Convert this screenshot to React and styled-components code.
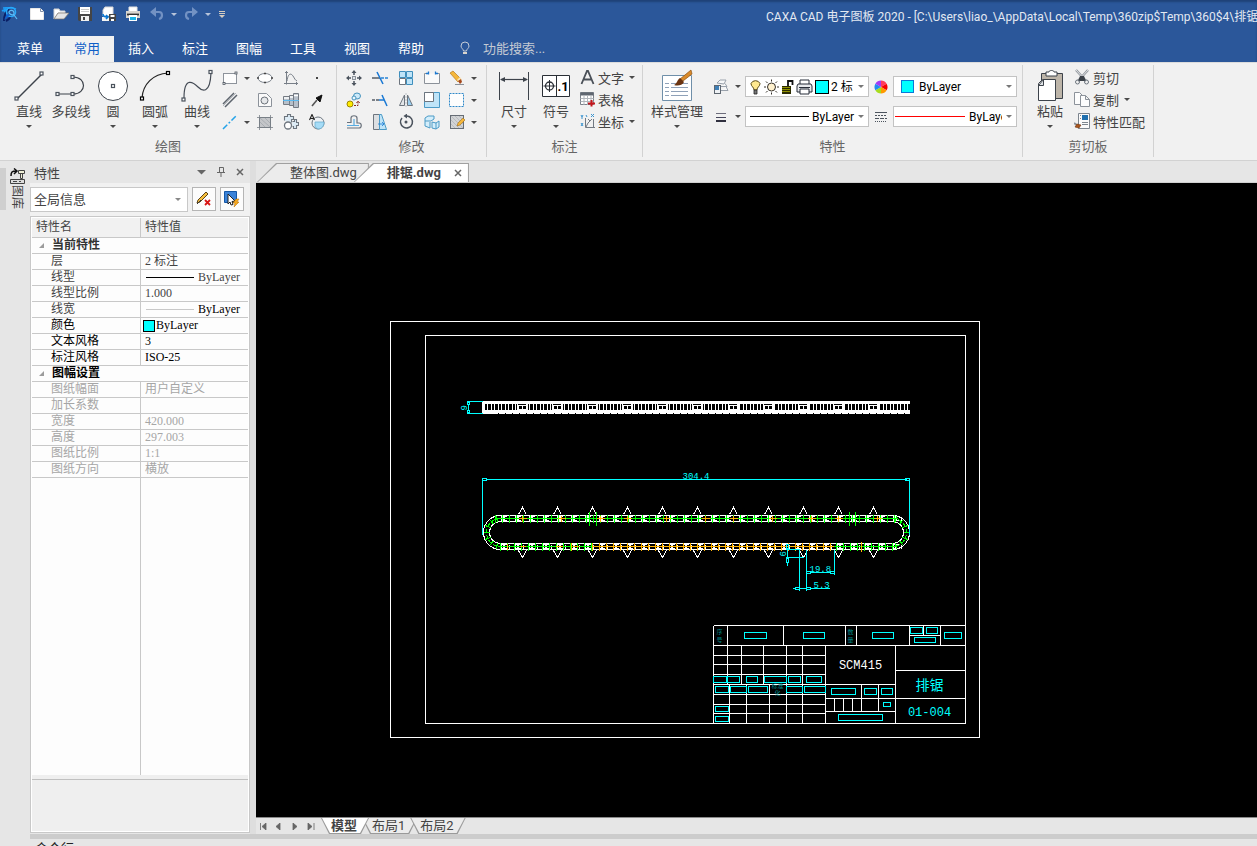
import React, { useState } from "react";
import styled, { createGlobalStyle, css } from "styled-components";

const uiFont = `Roboto, "Noto Sans CJK SC", "Noto Sans", sans-serif`;
const gridFont = `"Liberation Serif", "Noto Sans CJK SC", serif`;

const GlobalStyle = createGlobalStyle`
  *, *::before, *::after {
    box-sizing: border-box;
  }

  body {
    margin: 0;
    overflow: hidden;
    font-family: ${uiFont};
    font-size: 13px;
    color: #444;
    background: #e6e6e6;
  }

  button, input, select {
    font: inherit;
    color: inherit;
    margin: 0;
    padding: 0;
    border: none;
    background: none;
    border-radius: 0;
  }

  svg {
    display: block;
    flex: none;
  }
`;

const Shell = styled.div`
  height: 100vh;
  display: flex;
  flex-direction: column;
  overflow: hidden;
`;

/* ---------- title bar and menu ---------- */

const Header = styled.header`
  background: #2b579a;
  color: #fff;
  box-shadow: inset 0 2px 2px #1f4278;
`;

const TitleBar = styled.div`
  display: flex;
  justify-content: space-between;
  height: 36px;
`;

const QuickAccess = styled.div`
  display: flex;
  align-items: center;
  height: 28px;
  padding-left: 1px;
`;

const QuickTools = styled.div`
  display: flex;
  margin: 0 4px 0 6px;
`;

const QuickButton = styled.button`
  width: ${({ $narrow }) => ($narrow ? 10 : 24)}px;
  height: 22px;
  display: flex;
  align-items: center;
  justify-content: center;
`;

const WindowTitle = styled.div`
  flex: 0 0 491px;
  font-size: 12px;
  line-height: 34px;
  color: #e3e9f2;
  white-space: nowrap;
  overflow: hidden;
`;

const MenuBar = styled.nav`
  display: flex;
  height: 26px;
`;

const MenuTab = styled.button`
  width: ${({ $wide }) => ($wide ? 60 : 54)}px;
  line-height: 24px;
  color: #fff;

  ${({ $active }) =>
    $active &&
    css`
      background: #f1f1f1;
      color: #0f5fc8;
    `}
`;

const FeatureSearch = styled.label`
  display: flex;
  align-items: center;
  gap: 13px;
  margin-left: 22px;
  padding-bottom: 2px;
  color: #c3cfe1;

  input {
    width: 120px;
    outline: none;
  }

  input::placeholder {
    color: #c3c9d3;
    opacity: 1;
  }
`;

/* ---------- ribbon ---------- */

const Ribbon = styled.section`
  display: flex;
  background: #f1f1f1;
  border-top: 1px solid #dcdcdc;
  border-bottom: 1px solid #d2d2d2;
`;

const Group = styled.div`
  margin: 2px 0 3px;
  border-right: 1px solid #d2d2d2;
`;

const GroupBody = styled.div`
  display: flex;
  height: 72px;
  padding: 0 ${({ $right }) => $right}px 0 ${({ $left }) => $left}px;
`;

const GroupLabel = styled.div`
  line-height: 20px;
  text-align: center;
  color: #666;
`;

const BigButton = styled.button`
  width: ${({ $wide }) => ($wide ? 60 : 42)}px;
  padding-top: 4px;
  display: flex;
  flex-direction: column;
  align-items: center;
  line-height: 18px;
  white-space: nowrap;
`;

const Caret = styled.span`
  flex: none;
  width: 0;
  height: 0;
  border: 3px solid transparent;
  border-bottom: none;
  border-top-color: ${({ $light }) => ($light ? "#b7c4da" : "#4a4a4a")};
  margin: ${({ $gap }) => $gap || 0}px 0 0;
`;

const ToolGrid = styled.div`
  display: grid;
  grid-template-columns: ${({ $columns }) => $columns};
  grid-auto-rows: 22px;
  padding-top: 2px;
`;

const ToolButton = styled.button`
  display: flex;
  align-items: center;
  justify-content: ${({ $split }) => ($split ? "flex-start" : "center")};
  gap: 6px;
  padding-left: ${({ $split }) => ($split ? 4 : 0)}px;
`;

const RowList = styled.div`
  display: flex;
  flex-direction: column;
  padding: 1px 0 0 3px;
`;

const RowButton = styled.button`
  display: flex;
  align-items: center;
  height: 22px;
  gap: 3px;

  ${Caret} {
    margin-left: 2px;
  }
`;

const ComboStack = styled.div`
  display: flex;
  flex-direction: column;
  gap: 9px;
  padding: 11px 0 0 6px;
`;

const ComboLine = styled.div`
  display: flex;
  align-items: center;
  height: 21px;
`;

const StackButton = styled.button`
  width: ${({ $split }) => ($split ? 32 : 24)}px;
  display: flex;
  align-items: center;
  justify-content: ${({ $split }) => ($split ? "flex-start" : "center")};
  gap: 6px;
`;

const Combo = styled.label`
  width: 124px;
  height: 21px;
  display: flex;
  align-items: center;
  gap: ${({ $gap }) => $gap}px;
  padding: 0 4px 0 ${({ $left }) => $left}px;
  background: #fff;
  border: 1px solid #c3c3c3;
  color: #000;
  font-size: 12px;

  select {
    appearance: none;
    flex: 1 1 0;
    min-width: 0;
    height: 19px;
    outline: none;
    overflow: hidden;
    text-overflow: clip;
  }

  ${Caret} {
    border-top-color: #777;
    margin-left: ${({ $tail }) => $tail || 0}px;
  }
`;

const Swatch = styled.span`
  flex: none;
  width: ${({ $size }) => $size}px;
  height: ${({ $size }) => $size}px;
  background: #00ffff;
  border: 1px solid ${({ $edge }) => $edge};
`;

const LineSample = styled.span`
  flex: 0 0 ${({ $length }) => $length}px;
  height: 1px;
  background: ${({ $color }) => $color};
`;

/* ---------- work area ---------- */

const Main = styled.main`
  flex: 1;
  min-height: 0;
  display: flex;
`;

const Rail = styled.aside`
  flex: 0 0 30px;
  padding-top: 7px;
  display: flex;
  align-items: flex-start;
  gap: 4px;
`;

const RailHandle = styled.div`
  width: 6px;
  height: 42px;
  background: #cfcfcf;
`;

const RailTab = styled.button`
  width: 14px;
  display: flex;
  flex-direction: column;
  align-items: center;
  font-size: 12px;
  line-height: 14px;
  gap: 1px;

  span {
    writing-mode: vertical-rl;
    text-orientation: sideways;
  }
`;

const Panel = styled.aside`
  flex: 0 0 220px;
  display: flex;
  flex-direction: column;
`;

const PanelTitle = styled.div`
  height: 22px;
  display: flex;
  align-items: center;
  padding: 0 1px 0 4px;

  h2 {
    flex: 1;
    margin: 0;
    font-size: 13px;
    font-weight: 400;
  }
`;

const PanelIcon = styled.button`
  width: 19px;
  display: flex;
  justify-content: center;
  color: #666;
`;

const PanelTools = styled.div`
  display: flex;
  gap: 4px;
  padding: 4px 0 4px;
  background: #f1f1f1;
`;

const FilterCombo = styled.label`
  width: 158px;
  height: 25px;
  display: flex;
  align-items: center;
  padding: 0 6px 0 3px;
  background: #fff;
  border: 1px solid #c8c8c8;
  font-size: 13px;

  select {
    appearance: none;
    flex: 1;
    outline: none;
  }

  ${Caret} {
    border-top-color: #888;
  }
`;

const FilterButton = styled.button`
  width: 24px;
  height: 24px;
  display: flex;
  align-items: center;
  justify-content: center;
  background: #fcfcfc;
  border: 1px solid #b5b5b5;
`;

const PropertyBox = styled.div`
  flex: 1;
  display: flex;
  flex-direction: column;
  margin-bottom: 1px;
  padding: 1px;
  background: #fff;
  border: 1px solid #c8c8c8;
`;

const PropertyScroll = styled.div`
  flex: 1;
  background: linear-gradient(#c8c8c8, #c8c8c8) 108px 0 / 1px 100% no-repeat #fdfdfd;
`;

const PropertyTable = styled.table`
  width: 100%;
  table-layout: fixed;
  border-collapse: separate;
  border-spacing: 0;
  font-family: ${gridFont};
  font-size: 12px;
  line-height: 15px;

  th, td {
    padding: 0;
    height: 16px;
    text-align: left;
    font-weight: 400;
    white-space: nowrap;
    overflow: hidden;
    border-bottom: 1px solid #c8c8c8;
  }

  thead th {
    height: 20px;
    padding-left: 4px;
    background: #f1f1f1;
    font-family: ${uiFont};
  }

  thead th:first-child {
    border-right: 1px solid #c8c8c8;
  }
`;

const PropertyRow = styled.tr`
  color: ${({ $tone }) => ({ dim: "#a6a6a6", strong: "#000" })[$tone] || "#444"};

  th {
    padding-left: 19px;
    border-right: 1px solid #c8c8c8;
  }

  td {
    padding-left: 4px;
  }
`;

const SectionCell = styled.th`
  background: #fdfdfd;
  color: ${({ $strong }) => ($strong ? "#000" : "#333")};

  button {
    display: flex;
    align-items: center;
    gap: 8px;
    padding-left: 6px;
    font-weight: 700;
    line-height: 15px;
  }
`;

const ValueLine = styled.span`
  display: flex;
  align-items: center;
  gap: ${({ $swatch }) => ($swatch ? 1 : 4)}px;
  margin-left: ${({ $swatch }) => ($swatch ? -2 : 1)}px;
  color: ${({ $strong }) => ($strong ? "#000" : "inherit")};
`;

const PropertyHint = styled.div`
  height: 56px;
  padding-top: 4px;
  background: #efefef;

  &::before {
    content: "";
    display: block;
    height: 1px;
    background: #c0c0c0;
  }
`;

const Splitter = styled.div`
  flex: 0 0 6px;
  background: #dedede;
`;

const Workspace = styled.section`
  flex: 1;
  min-width: 0;
  display: flex;
  flex-direction: column;
`;

const DocTabs = styled.div`
  display: flex;
  align-items: flex-end;
  height: 22px;
  padding-top: 2px;
  border-bottom: 1px solid #d0d0d0;
`;

const DocTab = styled.div`
  position: relative;
  isolation: isolate;
  height: 19px;
  display: flex;
  align-items: center;
  gap: 13px;
  padding: 0 ${({ $active }) => ($active ? 7 : 12)}px 0 33px;
  margin-left: ${({ $active }) => ($active ? -15 : 1)}px;
  font-size: 13px;
  font-weight: ${({ $active }) => ($active ? 700 : 400)};
  line-height: 18px;
  white-space: nowrap;

  &::before, &::after {
    content: "";
    position: absolute;
    inset: 0;
    z-index: -1;
    background: #a0a0a0;
    clip-path: polygon(19px 0, 100% 0, 100% 100%, 0 100%);
  }

  &::after {
    inset: 1px 1px 0;
    background: ${({ $active }) => ($active ? "#fff" : "#ececec")};
  }

  button {
    font-weight: inherit;
  }
`;

const Canvas = styled.div`
  flex: 1;
  min-height: 0;
  background: #000;
  overflow: hidden;
`;

const SheetBar = styled.div`
  flex: none;
  display: flex;
  height: 17px;
  border-top: 1px solid #8a8a8a;
`;

const SheetNav = styled.div`
  display: flex;
  width: 65px;

  button {
    width: 16px;
    display: flex;
    align-items: center;
    padding-left: 3px;
  }
`;

const SheetTab = styled.button`
  position: relative;
  isolation: isolate;
  height: 16px;
  padding: 0 12px 0 10px;
  margin-right: -7px;
  line-height: 14px;
  font-weight: ${({ $active }) => ($active ? 700 : 400)};
  z-index: ${({ $active }) => ($active ? 1 : 0)};

  &::before, &::after {
    content: "";
    position: absolute;
    inset: 0;
    z-index: -1;
    background: #9a9a9a;
    clip-path: polygon(0 0, 100% 0, calc(100% - 8px) 100%, 8px 100%);
  }

  &::after {
    inset: 0 1px 1px;
    background: ${({ $active }) => ($active ? "#fff" : "#ececec")};
  }
`;

const CommandDock = styled.footer`
  flex: 0 0 12px;
  margin-left: 30px;
  border-top: 5px solid #cccccc;
  padding: 0 5px;
  line-height: 20px;
  color: #222;
  overflow: hidden;
`;

/* ---------- icons ---------- */

const Svg = ({ w = 16, h = 16, children }) => (
  <svg width={w} height={h} viewBox={`0 0 ${w} ${h}`} fill="none" stroke="#4b535d" aria-hidden="true">
    {children}
  </svg>
);

const node = { fill: "#fff", width: 3, height: 3, strokeWidth: 1.2 };

const icons = {
  logo: (
    <Svg w={18} h={18}>
      <path d="M3 16c0-5 1-9 5-12M5 16c2-1 4-3 5-5" stroke="#0a1f66" strokeWidth="2" />
      <path d="M2 3c4 0 8-1 13 1M3 7l3-3M1 6l4-2" stroke="#1d9df5" strokeWidth="1.600" />
      <circle cx="10" cy="7" r="4.5" stroke="#28a9fa" strokeWidth="1.600" />
      <path d="M8 8c0-4 5-3 5 0s-3 2-5 0M13 10l3 4" stroke="#5cbcf7" strokeWidth="1.200" />
      <path d="M3 15l3-6 3 1z" fill="#0d62d8" stroke="none" />
    </Svg>
  ),
  newFile: (
    <Svg>
      <path d="M1.500 2.500h10l3 3v8h-13z" fill="#fff" stroke="#e8e8e8" />
      <path d="M11.500 2.500v3h3" stroke="#7f8fa9" />
    </Svg>
  ),
  open: (
    <Svg>
      <path d="M1 13V3h5l1 2h5v2h-7z" fill="#fff" stroke="#d4d4d4" />
      <path d="M1 13l4-6h11l-5 6z" fill="#e6e6e6" stroke="#7b7468" strokeWidth=".7" />
    </Svg>
  ),
  save: (
    <Svg>
      <path d="M1 1h14v14H2l-1-1z" fill="#454545" stroke="none" />
      <path d="M3 1h10v7H3z" fill="#fff" stroke="none" />
      <path d="M4 3.500h8M4 5.500h8" stroke="#c9c9c9" />
      <path d="M4 10h8v5H4z" fill="#efefef" stroke="none" />
      <path d="M6 11h2v3H6z" fill="#454545" stroke="none" />
    </Svg>
  ),
  saveAs: (
    <Svg>
      <path d="M4 1h8v9H2V4z" fill="#fff" stroke="#d8d8d8" />
      <path d="M1 11h8v4H1z" fill="#f4f4f4" stroke="none" />
      <path d="M2 8c0 3 2 3 4 3M5 9l2 2-2 2" stroke="#0978d4" strokeWidth="1.6" />
      <path d="M8 8h7v7H8z" fill="#454545" stroke="none" />
      <path d="M9.500 9h4v2h-4zM10 13h3v2h-3z" fill="#fff" stroke="none" />
    </Svg>
  ),
  print: (
    <Svg>
      <path d="M4 5V1h8v4" fill="#fff" stroke="#e4e4e4" />
      <path d="M1 5h14v7H1z" fill="#d8d5cf" stroke="none" />
      <path d="M2 8.500h12" stroke="#333" strokeWidth="1.800" />
      <path d="M4 9h8v6H4z" fill="#fff" stroke="none" />
      <path d="M5 11h6v3H5z" fill="#1db5e8" stroke="none" />
    </Svg>
  ),
  undo: (
    <Svg>
      <path d="M2 6h8c4 0 4 6 0 7" stroke="#7392c3" strokeWidth="2.200" />
      <path d="M7 1v10L1 6z" fill="#7392c3" stroke="none" />
    </Svg>
  ),
  redo: (
    <Svg>
      <path d="M14 6H6c-4 0-4 6 0 7" stroke="#7392c3" strokeWidth="2.200" />
      <path d="M9 1v10l6-5z" fill="#7392c3" stroke="none" />
    </Svg>
  ),
  customize: (
    <Svg w={6} h={9}>
      <path d="M0 1.500h6M0 3.500h6" stroke="#d3cbbf" />
      <path d="M0 5h6L3 8z" fill="#d3cbbf" stroke="none" />
    </Svg>
  ),
  hint: (
    <Svg w={10} h={14}>
      <path d="M3.500 10c0-2-2.500-2.600-2.500-5a4 4 0 0 1 8 0c0 2.400-2.500 3-2.500 5z" stroke="#c5ccd8" />
      <path d="M3 11h4v2H3z" fill="#d9d4cc" stroke="none" />
    </Svg>
  ),
  line: (
    <Svg w={32} h={34}>
      <path d="M4 30L29 5" stroke="#3d434b" strokeWidth="1.500" />
      <rect x="2" y="28" {...node} />
      <rect x="27" y="3" {...node} />
    </Svg>
  ),
  polyline: (
    <Svg w={32} h={34}>
      <path d="M2 25h16c14 0 14-17 0-17" stroke="#3d434b" strokeWidth="1.200" />
      <rect x="1" y="23.500" {...node} />
      <rect x="16" y="23.500" {...node} />
      <rect x="16" y="6.500" {...node} />
    </Svg>
  ),
  circle: (
    <Svg w={32} h={34}>
      <circle cx="16" cy="17" r="14.500" fill="#fff" stroke="#3d434b" />
      <rect x="14.500" y="15.500" {...node} />
    </Svg>
  ),
  arc: (
    <Svg w={32} h={34}>
      <path d="M3 29C4 15 14 5 29 4" stroke="#222" strokeWidth="1.200" />
      <g stroke="#000">
        <rect x="1.500" y="28" {...node} />
        <rect x="27.500" y="2.500" {...node} />
      </g>
    </Svg>
  ),
  spline: (
    <Svg w={32} h={34}>
      <path d="M3 29C3 6 13 14 17 18s12 8 13-14" stroke="#444b55" strokeWidth="1.200" />
      <rect x="1" y="29" {...node} />
      <rect x="28" y="1.500" {...node} />
    </Svg>
  ),
  rect: (
    <Svg>
      <rect x="1.500" y="3.500" width="13" height="10" fill="#fdfdfd" stroke="#8d939b" />
      <rect x="13" y="2" width="2" height="2" fill="#fff" stroke="#4b535d" strokeWidth=".8" />
      <rect x="1" y="12.500" width="2" height="2" fill="#fff" stroke="#4b535d" strokeWidth=".8" />
    </Svg>
  ),
  ellipse: (
    <Svg>
      <ellipse cx="8" cy="8" rx="7" ry="4.500" fill="#fff" stroke="#7d848d" />
      <path d="M7 3.500h2M7 12.500h2M1 7v2M15 7v2" stroke="#444" strokeWidth="1.500" />
    </Svg>
  ),
  curve: (
    <Svg>
      <path d="M3.500 1v13.500M1 13.500h14M2 2.500h3M13.500 12v3" stroke="#777e87" />
      <path d="M4 11C5 3 8 3 10 6s2 4 4 5" stroke="#777e87" />
    </Svg>
  ),
  point: (
    <Svg>
      <rect x="7" y="7" width="2" height="2" fill="#444" stroke="none" />
    </Svg>
  ),
  parallel: (
    <Svg>
      <path d="M1 12L12 1M3 15L15 3" stroke="#5d646d" strokeWidth="1.500" />
      <path d="M1 14L14 1" stroke="#b4b8be" />
    </Svg>
  ),
  region: (
    <Svg>
      <path d="M1.500 1.500h8l5 5v8h-13z" fill="#fafafa" stroke="#8c929a" />
      <circle cx="7.500" cy="8.500" r="3.500" fill="#e6e8ea" stroke="#6b7179" />
    </Svg>
  ),
  shaft: (
    <Svg>
      <path d="M.5 4.500h6v8h-6zM6.500 3.500h4v10h-4zM10.500 1.500h5v14h-5z" fill="#b7c0ca" stroke="#747a82" />
      <path d="M1 6h5M7 5h3M11 3.500h4" stroke="#fff" strokeWidth="1.500" />
      <path d="M0 8.500h16" stroke="#5ab8ee" />
    </Svg>
  ),
  arrow: (
    <Svg>
      <path d="M3 14l5-6" stroke="#555" strokeWidth="1.600" />
      <path d="M13 3L7 6l4 4z" fill="#111" stroke="#111" />
    </Svg>
  ),
  centerline: (
    <Svg>
      <path d="M1 15L15 1" stroke="#25a3e8" strokeWidth="1.500" strokeDasharray="6 2 2 2" />
    </Svg>
  ),
  hatch: (
    <Svg>
      <rect x="2.500" y="3.500" width="11" height="10" fill="#c4c6c9" stroke="#737981" />
      <path d="M0 3.500h16M0 13.500h16M2.500 1v15M13.500 1v15" stroke="#7a8088" strokeWidth=".8" />
      <path d="M3 8l5 5M3 4l10 9M8 4l5 5" stroke="#979ca2" strokeWidth=".6" />
    </Svg>
  ),
  gears: (
    <Svg>
      <path
        d="M1.500 6.500v-4h3v-2h3v2h3v3h-2v3M9.500 7.500h2v-2h2v3h2v3h-2v3h-3v-2h-1"
        stroke="#6d757e"
        strokeWidth="1.100"
        fill="#dcebf5"
      />
      <circle cx="5" cy="11.500" r="3.500" fill="#fff" stroke="#6d757e" strokeWidth="1.300" />
    </Svg>
  ),
  localView: (
    <Svg>
      <circle cx="9" cy="9" r="6" fill="#eef1f4" stroke="#6d757e" />
      <path d="M6 8h9c0 4-2 7-6 7l-3-2z" fill="#a6dcf7" stroke="#6aaed0" strokeWidth=".8" />
      <path d="M.5 6L3 .5 5.500 6M1.500 4.500h3" stroke="#222" strokeWidth="1.100" />
    </Svg>
  ),
  move: (
    <Svg>
      <path d="M8 2v3M8 11v3M2 8h3M11 8h3" stroke="#4b535d" strokeWidth="1.500" />
      <path d="M8 0l2.500 3h-5zM8 16l2.500-3h-5zM0 8l3-2.500v5zM16 8l-3-2.500v5z" fill="#4b535d" stroke="none" />
      <rect x="6.500" y="6.500" width="3" height="3" fill="#e0e4e8" stroke="#8c939b" />
    </Svg>
  ),
  trim: (
    <Svg>
      <path d="M0 8h8" stroke="#555c65" strokeWidth="1.500" />
      <path d="M9 8h7" stroke="#2784d6" strokeWidth="1.300" strokeDasharray="3 1" />
      <path d="M5 2l6 12" stroke="#1878d4" strokeWidth="1.500" />
    </Svg>
  ),
  array: (
    <Svg>
      <path d="M1.500 1.500h6v6h-6zM8.500 1.500h6v6h-6zM8.500 8.500h6v6h-6z" fill="#bfe4f8" stroke="#3f8fbd" />
      <path d="M1.500 8.500h6v6h-6z" fill="#fff" stroke="#6d757e" />
    </Svg>
  ),
  breakAt: (
    <Svg>
      <path d="M5 3.500H.5v10h15v-10H11" fill="#fafafa" stroke="#8b9199" />
      <path d="M4.500 1.500v3M11.500 1.500v3M2 3.500h3M11 3.500h3" stroke="#1b78cf" strokeWidth="1.300" />
    </Svg>
  ),
  erase: (
    <Svg>
      <path d="M1 3l3-2 8 8-3 3z" fill="#f5b73b" stroke="#b77a1d" strokeWidth=".7" />
      <path d="M8 10l3-3 2 3-3 2z" fill="#fbe3b2" stroke="none" />
      <path d="M9 11l3-2 1 3-2 2z" fill="#a5481d" stroke="none" />
      <path d="M6 14.500h9" stroke="#8b9199" />
    </Svg>
  ),
  copyObj: (
    <Svg>
      <circle cx="4" cy="12" r="3" fill="#ffea00" stroke="#9b8700" />
      <ellipse cx="11" cy="4" rx="3.500" ry="3" fill="#cdeafa" stroke="#4593bd" />
      <ellipse cx="8" cy="6" rx="2" ry="2" stroke="#4593bd" fill="#e9f6fd" />
      <path d="M8 13.500h4v-4M10.500 11l1.500-2 2 2" stroke="#8a2a22" strokeDasharray="2 1" />
    </Svg>
  ),
  extend: (
    <Svg>
      <path d="M0 8h7" stroke="#555c65" strokeWidth="1.500" strokeDasharray="3 1" />
      <path d="M7 8h5" stroke="#1878d4" strokeWidth="1.500" />
      <path d="M10 3l5 11" stroke="#1878d4" strokeWidth="1.500" />
    </Svg>
  ),
  mirror: (
    <Svg>
      <path d="M6.500 3v10.500h-5z" fill="#e3e6e9" stroke="#6d757e" />
      <path d="M9.500 3v10.500h5z" fill="#9bcff0" stroke="#6d757e" />
      <path d="M8 1v14" stroke="#b0b6bd" strokeWidth=".8" strokeDasharray="2 1" />
    </Svg>
  ),
  scale: (
    <Svg>
      <path d="M.5.500h15v15H.5z" fill="#bfe4f8" stroke="#4b9ac6" />
      <path d="M.5.500h9v9h-9z" fill="#fff" stroke="#6d757e" />
    </Svg>
  ),
  stretchBox: (
    <Svg>
      <rect x=".5" y="1.500" width="14" height="13" fill="#fdfdfd" stroke="#2e88c9" strokeDasharray="2 1" />
    </Svg>
  ),
  offset: (
    <Svg>
      <path d="M1 8.500h4V4c0-3 6-3 6 0v5h2c3 0 3 5 0 5H1" stroke="#69717b" strokeWidth="1.200" />
      <path d="M1 11.500h7V5M8 11.500h5" stroke="#59ace0" strokeWidth="1.200" />
    </Svg>
  ),
  chamfer: (
    <Svg>
      <path d="M1.500.5h6v15h-6z" fill="#dcdfe2" stroke="#6d757e" />
      <path d="M7.500.5h2l5 15h-7z" fill="#bfe4f8" stroke="#4b9ac6" />
      <path d="M6 10h6M10 8l2 2-2 2" stroke="#1878d4" strokeWidth=".8" />
    </Svg>
  ),
  rotate: (
    <Svg>
      <path d="M9 2a6 6 0 1 1-5 2" stroke="#4b535d" strokeWidth="1.500" />
      <path d="M9-.5v5L5.500 2z" fill="#4b535d" stroke="none" />
      <circle cx="8" cy="8" r="1.500" fill="#4b535d" stroke="none" />
    </Svg>
  ),
  explode: (
    <Svg>
      <path d="M1 4l3-2h6v3l-3 2H1zM1 7v5l5 2V8M8 8v6l4 1V9zM12 9l3-2v6l-3 2" fill="#d4eefb" stroke="#4b9ac6" />
    </Svg>
  ),
  hatchEdit: (
    <Svg>
      <rect x="1.500" y="1.500" width="13" height="13" fill="#d2d4d6" stroke="#666d75" />
      <path d="M2 6l8 8M2 10l4 4M2 2l12 12M6 2l8 8M10 2l4 4" stroke="#a6aab0" strokeWidth=".6" />
      <path d="M8 12l1-3 5-5 2 2-5 5z" fill="#f5b73b" stroke="#9a6a1c" strokeWidth=".6" />
    </Svg>
  ),
  dimension: (
    <Svg w={32} h={34}>
      <path d="M1.500 3v28M30.500 3v28" stroke="#3d434b" />
      <path d="M3 10.500h26" stroke="#3d434b" strokeWidth="1.200" />
      <path d="M2 10.500l5-2.500v5zM30 10.500L25 8v5z" fill="#3d434b" stroke="none" />
    </Svg>
  ),
  symbol: (
    <Svg w={32} h={34}>
      <path d="M2.500 6.500h27v21h-27zM16.500 6v22" fill="#fff" stroke="#2a2f36" />
      <circle cx="9.500" cy="17" r="4" stroke="#2a2f36" strokeWidth="1.300" />
      <path d="M3.500 17h12M9.500 11v12" stroke="#2a2f36" />
      <text x="23" y="22" textAnchor="middle" fontSize="13" fontWeight="700" fill="#000" stroke="none">
        .1
      </text>
    </Svg>
  ),
  text: (
    <Svg w={15}>
      <path d="M1.500 15L7 2h1l5.500 13M4 10.500h7" stroke="#4a5058" strokeWidth="1.800" />
    </Svg>
  ),
  table: (
    <Svg w={15}>
      <path d="M.5 1.500h13v12H.5z" fill="#fff" stroke="#7b818a" />
      <path d="M.5 1.500h13v3H.5z" fill="#5f6670" stroke="none" />
      <path d="M.5 7.500h13M.5 10.500h13M4 4v10M7.500 4v10M11 4v10" stroke="#b1b6bc" />
      <path d="M11.500 9v6.500M8 12.500h7" stroke="#c4161c" strokeWidth="2" />
    </Svg>
  ),
  coordinate: (
    <Svg w={15}>
      <path d="M5.500 5v9.500H15M13.500 6v9M6 14l2-4 4-4M8 6l2 2" stroke="#737a83" />
      <path d="M1 2l1 2 1-2M2 4v2M11 1l3 3M14 1l-3 3M1 10l2 3M3 10l-2 3M6 2l1 2" stroke="#3a93cf" />
    </Svg>
  ),
  style: (
    <Svg w={32} h={34}>
      <path d="M1.500 6.500h29v25h-29z" fill="#fff" stroke="#6f8fa9" />
      <path
        d="M4 14.500h4M4 18.500h4M4 22.500h4M4 26.500h4M10 14.500h17M10 18.500h17M10 22.500h17M10 26.500h17"
        stroke="#8fa1b8"
      />
      <path d="M30 1l1 4-9 7-3-2z" fill="#d98a2b" stroke="#8d5212" strokeWidth=".7" />
      <path d="M19 9l4 4c-2 4-7 4-10 3 3-1 3-5 6-7z" fill="#6b3310" stroke="none" />
    </Svg>
  ),
  layerTool: (
    <Svg>
      <path d="M4 4l3-3h6l-2 4zM8 7.500h6l-2-3M8 11.500h7l-2-4" fill="#f7f8f9" stroke="#9aa2ac" />
      <rect x="1.500" y="6.500" width="6" height="8" fill="#eef1f4" stroke="#5d6670" />
      <rect x="2" y="7" width="4" height="4" fill="#3f7fb5" stroke="none" />
    </Svg>
  ),
  weight: (
    <Svg>
      <path d="M3 4.500h10" stroke="#6d6d7c" />
      <path d="M3 8.500h10" stroke="#45455a" />
      <path d="M3 12h10" stroke="#30303f" strokeWidth="2" />
    </Svg>
  ),
  bulb: (
    <Svg w={12}>
      <path d="M4 11c0-3-3-3.500-3-6.500a5 5 0 0 1 9 0c0 3-3 3.500-3 6.500z" fill="#ffe98f" stroke="#5b4a12" />
      <path d="M4 11h3v4H4z" fill="#777" stroke="#222" strokeWidth=".8" />
    </Svg>
  ),
  sun: (
    <Svg w={15}>
      <circle cx="7.500" cy="8" r="4" fill="#fff1ce" stroke="#35302a" />
      <path
        d="M7.500 .5v2M7.500 13.500v2M0 8h2M13 8h2M2 2.500l1.500 1.500M11.500 12l1.500 1.500M13 2.500L11.500 4M3.500 12L2 13.500"
        stroke="#35302a"
      />
    </Svg>
  ),
  lock: (
    <Svg w={13}>
      <path d="M7 7V2h4.500v4" stroke="#111" strokeWidth="1.800" />
      <path d="M1 7h9v8H1z" fill="#2b2b00" stroke="none" />
      <path d="M1 8.500h8M1 10.500h8M1 12.500h8" stroke="#a9a900" strokeWidth=".8" />
    </Svg>
  ),
  printer: (
    <Svg w={17}>
      <path d="M4 5V1h9v4" fill="#fff" stroke="#272c38" />
      <path d="M2 5h13l1 2v6H1V7z" fill="#e7e9ec" stroke="#272c38" />
      <path d="M4 10h9v5H4z" fill="#fff" stroke="#272c38" />
      <path d="M3 8.500h11" stroke="#272c38" />
    </Svg>
  ),
  wheel: (
    <Svg w={14} h={14}>
      <g stroke="none">
        <path d="M7 7V.500a6.500 6.500 0 0 1 5.600 3.200z" fill="#ff3b5c" />
        <path d="M7 7l5.600-3.300a6.500 6.500 0 0 1 0 6.600z" fill="#f50000" />
        <path d="M7 7l5.600 3.300A6.500 6.500 0 0 1 7 13.500z" fill="#ff9a00" />
        <path d="M7 7v6.500a6.500 6.500 0 0 1-5.600-3.200z" fill="#a8dc1e" />
        <path d="M7 7l-5.600 3.300a6.500 6.500 0 0 1 0-6.600z" fill="#1f8df0" />
        <path d="M7 7L1.400 3.700A6.500 6.500 0 0 1 7 .500z" fill="#a23af5" />
      </g>
    </Svg>
  ),
  linetype: (
    <Svg w={14} h={12}>
      <path d="M1 1.500h12" />
      <path d="M1 4.500h12" strokeDasharray="2 1" />
      <path d="M1 7.500h12" strokeDasharray="4 1" />
      <path d="M1 10.500h12" strokeDasharray="1 1" />
    </Svg>
  ),
  paste: (
    <Svg w={32} h={34}>
      <path d="M7.500 4.500h21v25h-21z" fill="#bdb5a9" stroke="#3d434b" />
      <path d="M12 3h3c0-2 5-2 5 0h3v4H12z" fill="#fff" stroke="#3d434b" />
      <path d="M8.500 10.500h13v21h-17v-17z" fill="#fff" stroke="#3d434b" />
      <path d="M4.500 16.500h5v-6z" fill="#dfe3e6" stroke="#3d434b" />
    </Svg>
  ),
  cut: (
    <Svg>
      <path d="M2 1l10 11M14 1L4 12" stroke="#8f959c" strokeWidth="2.400" />
      <path d="M2 1l10 11M14 1L4 12" stroke="#f5f5f5" strokeWidth=".8" />
      <path d="M6 7h4l2 5H4z" fill="#3b4148" stroke="none" />
      <circle cx="3.500" cy="13" r="2" stroke="#6d757e" />
      <circle cx="12.500" cy="13" r="2" stroke="#6d757e" />
    </Svg>
  ),
  copy: (
    <Svg>
      <path d="M.5 1.500h5l3 3v9h-8z" fill="#fdfdfd" stroke="#8c929a" />
      <path d="M6.500 4.500h5l4 4v7h-9zM11.500 4.500v4h4" fill="#fdfdfd" stroke="#8c929a" />
    </Svg>
  ),
  match: (
    <Svg>
      <path d="M4.500.5h11v15h-11z" fill="#fafafa" stroke="#7d858e" />
      <path d="M8 2h6v5H8z" fill="#1f6fae" stroke="none" />
      <path d="M6 2.500h1M6 5.500h1M8 9.500h6M8 11.500h6" stroke="#7d858e" />
      <path d="M0 10l3 2" stroke="#8c929a" strokeWidth="2" />
      <path d="M3 11l4 1-2 3-4-1z" fill="#a9551c" stroke="#6d3410" strokeWidth=".6" />
    </Svg>
  ),
  library: (
    <Svg w={15}>
      <path d="M1 8c0-4 1-5 5-5M4 .5L7 3 4 6" stroke="#111" strokeWidth="1.500" />
      <path d="M8.500 2.500h6v3h-6zM10.500 5.500h2v5h-2z" fill="#f0f0d8" stroke="#444" />
      <path d="M.5 11.500h14v4H.5zM3 13.500h4M9 13.500h2" fill="#ddd" stroke="#444" />
    </Svg>
  ),
  menuDown: (
    <Svg w={9} h={6}>
      <path d="M0 1h9L4.500 5.500z" fill="#666" stroke="none" />
    </Svg>
  ),
  pin: (
    <Svg w={8} h={10}>
      <path d="M2 .5h4.500v5M2.500 0v6M0 5.500h8M4 6v4" stroke="#666" />
    </Svg>
  ),
  close: (
    <Svg w={8} h={8}>
      <path d="M1 1l6 6M7 1L1 7" stroke="#666" strokeWidth="1.500" />
    </Svg>
  ),
  clearFilter: (
    <Svg w={18} h={18}>
      <path d="M2 13l1-3 8-8 2 2-8 8z" fill="#f6bf3c" stroke="#5b431a" />
      <path d="M2 14l4-4" stroke="#333" />
      <path d="M10 10l5 5M15 10l-5 5" stroke="#d81414" strokeWidth="1.800" />
    </Svg>
  ),
  quickSelect: (
    <Svg w={18} h={18}>
      <path d="M1.500 1.500h12v11h-12z" fill="#3a82d8" stroke="#1557a6" />
      <path d="M5 4l7 7-3 .5 1 3-2 .5-1-3-2 2z" fill="#fff" stroke="#222" />
      <path d="M13 9l-3 4h2l-1 4 5-5h-2l2-3z" fill="#f7a91e" stroke="#b26a00" strokeWidth=".5" />
    </Svg>
  ),
  fold: (
    <Svg w={6} h={6}>
      <path d="M6 0v5H1z" fill="#9c9c9c" stroke="none" />
    </Svg>
  ),
};

const navIcons = [
  ["第一页", "M1.500 0v7M7 0v7L3 3.500z"],
  ["上一页", "M5 0v7L1 3.500z"],
  ["下一页", "M2 0v7l4-3.500z"],
  ["最后一页", "M1 0v7l4-3.500zM7 0v7"],
];

/* ---------- drawing ---------- */

const range = (from, to, step) => {
  const out = [];
  for (let v = from; v <= to; v += step) out.push(v);
  return out;
};

const teeth = [522, 557, 592, 627, 662, 697, 733, 768, 803, 838, 873];

// [x1, y1, x2, y2] in drawing units
const titleBlockLines = [
  [713, 625, 965, 625], [713, 645, 965, 645], [713, 625, 713, 723],
  [727, 625, 727, 645], [783, 625, 783, 645], [845, 625, 845, 645],
  [856, 625, 856, 645], [909, 625, 909, 645], [940, 625, 940, 645],
  [909, 635, 940, 635], [923, 625, 923, 635],
  [713, 655, 825, 655], [713, 664, 825, 664], [713, 674, 825, 674],
  [713, 684, 895, 684], [713, 694, 825, 694], [713, 704, 825, 704],
  [713, 713, 825, 713],
  [727, 645, 727, 684], [741, 645, 741, 684], [763, 645, 763, 684],
  [786, 645, 786, 723], [802, 645, 802, 723], [729, 684, 729, 723],
  [746, 684, 746, 723], [769, 684, 769, 723],
  [825, 645, 825, 723], [895, 645, 895, 723],
  [895, 670, 965, 670], [825, 698, 965, 698], [825, 711, 895, 711],
  [861, 684, 861, 711], [878, 684, 878, 711],
  [834, 698, 834, 711], [843, 698, 843, 711], [852, 698, 852, 711],
];

// [x, y, width, height]
const titleBlockFields = [
  [744, 632, 22, 6], [803, 632, 21, 6], [872, 632, 21, 6],
  [910, 627, 12, 6], [926, 627, 11, 6], [914, 637, 21, 5], [944, 632, 17, 6],
  [713, 676, 13, 6], [727, 676, 12, 6], [746, 676, 11, 6], [764, 676, 22, 6],
  [788, 676, 12, 6], [806, 676, 15, 6],
  [715, 686, 13, 6], [730, 686, 16, 6], [748, 686, 19, 6], [786, 686, 16, 6], [804, 686, 21, 6],
  [831, 688, 24, 6], [864, 688, 12, 6], [881, 688, 11, 6],
  [715, 706, 13, 5], [715, 716, 13, 5], [883, 702, 7, 4], [838, 714, 44, 6],
];

const smallLabels = [
  ["序", 719, 633], ["号", 719, 641], ["数", 850, 633], ["量", 850, 641], ["标准", 777, 687], ["化", 777, 694],
];

const lineD = (list) => list.map(([a, b, c, d]) => `M${a} ${b}L${c} ${d}`).join("");
const boxD = (list) => list.map(([x, y, w, h]) => `M${x} ${y}h${w}v${h}h${-w}z`).join("");

const linkMarks = (y) =>
  range(500, 892, 14)
    .map((x) => `M${x} ${y - 2}h6M${x} ${y + 2}h6M${x + 1} ${y - 1}l4 3M${x + 1} ${y + 1}l4 -3M${x + 9} ${y - 2}v4`)
    .join("");

const ticks = (from, to, y) => range(from, to, 7).map((x) => `M${x} ${y - 4}v8`).join("");

const endTicks = (cx, side) =>
  range(-75, 75, 25)
    .map((deg) => {
      const a = (deg * Math.PI) / 180;
      const dx = Math.cos(a) * side;
      const dy = Math.sin(a);
      return `M${cx + dx * 11} ${532 + dy * 11}L${cx + dx * 17} ${532 + dy * 17}`;
    })
    .join("");

const Drawing = () => (
  <svg
    width="1001"
    height="634"
    viewBox="255.5 182.5 1001 634"
    fill="none"
    shapeRendering="crispEdges"
    fontFamily={`"Liberation Mono", "Noto Sans CJK SC", monospace`}
    role="img"
    aria-label="排锯"
  >
    <g stroke="#fff">
      <path d={boxD([[390, 321, 589, 416], [425, 335, 540, 388]])} />
      <path d={lineD(titleBlockLines)} />
    </g>

    {/* top view of the saw chain */}
    <rect x="481.500" y="400.500" width="428" height="13" fill="#fff" />
    <path
      d={range(485, 905, 7).map((x) => `M${x} 404h2v6h-2zM${x + 3} 404h3v6h-3z`).join("")}
      fill="#000"
      transform="translate(-0.5 -0.5)"
    />
    {teeth.map((x) => (
      <g key={x} transform="translate(-0.5 -0.5)">
        <rect x={x - 5} y="403" width="11" height="7" fill="#fff" />
        <path d={`M${x - 3} 406h3v3h-3zM${x + 1} 406h3v3h-3zM${x - 4} 404h8v1h-8z`} fill="#000" />
      </g>
    ))}
    <path d={range(497, 905, 7).map((x) => `M${x} 413h1`).join("")} stroke="#000" />

    {/* side view */}
    <g stroke="#fff">
      <path d="M500 515H892A17 17 0 0 1 892 549H500A17 17 0 0 1 500 515z" />
      <path d="M500 521H892A11 11 0 0 1 892 543H500A11 11 0 0 1 500 521z" />
      <path d={linkMarks(518) + linkMarks(546)} />
      <path d={teeth.map((x) => `M${x - 4} 514l4 -7l4 7M${x - 4} 550l4 7l4 -7`).join("")} />
    </g>
    <g stroke="#00ff00">
      <path d="M495 518H897M497 546H592M833 546H895" />
      <path d={ticks(495, 896, 518) + ticks(500, 592, 546) + ticks(836, 892, 546)} />
      <path d={endTicks(500, -1) + endTicks(892, 1)} />
      <path d="M500 518A14 14 0 0 0 500 546M892 518A14 14 0 0 1 892 546" strokeDasharray="4 2" />
      <path d="M589 511v14M596 511v14M849 511v14M855 511v14" />
    </g>
    <g stroke="#ffb400">
      <path d="M592 546H833" />
      <path d={ticks(592, 833, 546)} />
      <path d={teeth.map((x, i) => `M${x - 4 + (i % 3) * 4} 518h8M${x + (i % 3) * 4} 515v6`).join("")} />
      <path d="M507 546v-3v6M519 546h6M555 546h7M572 546h6M861 541v10M571 542v8" />
    </g>

    {/* dimensions */}
    <g stroke="#00ffff">
      <path d="M466 401H482M466 413H482M468 404V410" />
      <path d="M482 477V534M909 477V534M486 479H906" />
      <path d={boxD([[482, 478, 4, 2], [905, 478, 4, 2], [467, 402, 2, 2], [467, 410, 2, 2]])} />
      <path d="M787 548V558M787 561V565M785 549H799M785 557H803M799 549V590M806 549V590M834 549V574" />
      <path d="M810 572H830M792 588H795M799 588H806M810 588H829" />
      <path
        d={boxD([
          [806, 571, 4, 2], [830, 571, 4, 2], [795, 587, 4, 2],
          [806, 587, 4, 2], [786, 544, 2, 4], [786, 558, 2, 4],
        ])}
      />
      <path d={boxD(titleBlockFields)} />
    </g>
    <g fill="#00ffff" fontSize="9">
      <text x="682" y="478">304.4</text>
      <text x="809" y="571">19.8</text>
      <text x="813" y="587">5.3</text>
      <text transform="translate(466 410) rotate(-90)">9</text>
      <text transform="translate(785 556) rotate(-90)">6</text>
    </g>
    <g fill="#008a8a" fontSize="6" textAnchor="middle">
      {smallLabels.map(([t, x, y]) => (
        <text key={t} x={x} y={y}>{t}</text>
      ))}
    </g>
    <g fontSize="12" textAnchor="middle">
      <text x="860" y="668" fill="#fff">SCM415</text>
      <text x="929" y="689" fill="#00ffff" fontSize="14">排锯</text>
      <text x="929" y="715" fill="#00ffff">01-004</text>
    </g>
  </svg>
);

/* ---------- data ---------- */

const menus = ["常用", "插入", "标注", "图幅", "工具", "视图", "帮助"];

const drawTools = [
  ["rect", "矩形", true], ["ellipse", "椭圆"], ["curve", "公式曲线"], ["point", "点"],
  ["parallel", "平行线", false, true], ["region", "轮廓"], ["shaft", "孔/轴"], ["arrow", "箭头"],
  ["centerline", "中心线", true], ["hatch", "剖面线"], ["gears", "齿轮"], ["localView", "局部放大"],
];

const editTools = [
  ["move", "平移"], ["trim", "裁剪"], ["array", "阵列"], ["breakAt", "打断"], ["erase", "删除", true],
  ["copyObj", "平移复制"], ["extend", "延伸"], ["mirror", "镜像"], ["scale", "缩放"], ["stretchBox", "拉伸", true],
  ["offset", "等距线"], ["chamfer", "过渡"], ["rotate", "旋转"], ["explode", "分解"], ["hatchEdit", "编辑", true],
];

const sections = [
  {
    title: "当前特性",
    rows: [
      { name: "层", value: "2  标注" },
      { name: "线型", value: "ByLayer", line: "#000" },
      { name: "线型比例", value: "1.000" },
      { name: "线宽", value: "ByLayer", line: "#c8c8c8", strongValue: true },
      { name: "颜色", value: "ByLayer", swatch: true, tone: "strong" },
      { name: "文本风格", value: "3", tone: "strong" },
      { name: "标注风格", value: "ISO-25", tone: "strong" },
    ],
  },
  {
    title: "图幅设置",
    strong: true,
    rows: [
      { name: "图纸幅面", value: "用户自定义", tone: "dim" },
      { name: "加长系数", value: "", tone: "dim" },
      { name: "宽度", value: "420.000", tone: "dim" },
      { name: "高度", value: "297.003", tone: "dim" },
      { name: "图纸比例", value: "1:1", tone: "dim" },
      { name: "图纸方向", value: "横放", tone: "dim" },
    ],
  },
];

const Big = ({ icon, label, caret = true, wide }) => (
  <BigButton $wide={wide}>
    {icons[icon]}
    {label}
    {caret && <Caret $gap={4} />}
  </BigButton>
);

const Tools = ({ items, columns }) => (
  <ToolGrid $columns={columns}>
    {items.map(([icon, label, caret, split]) => (
      <ToolButton key={icon} aria-label={label} $split={caret || split}>
        {icons[icon]}
        {caret && <Caret />}
      </ToolButton>
    ))}
  </ToolGrid>
);

const Row = ({ icon, label, caret }) => (
  <RowButton>
    {icons[icon]}
    {label}
    {caret && <Caret />}
  </RowButton>
);

const PropertyValue = ({ row }) => {
  if (row.swatch) {
    return (
      <ValueLine $swatch>
        <Swatch $size={12} $edge="#000" />
        {row.value}
      </ValueLine>
    );
  }
  if (row.line) {
    return (
      <ValueLine $strong={row.strongValue}>
        <LineSample $length={48} $color={row.line} />
        {row.value}
      </ValueLine>
    );
  }
  return row.value;
};

const App = () => {
  const [menu, setMenu] = useState("常用");
  const [sheet, setSheet] = useState("模型");
  const [query, setQuery] = useState("");

  return (
    <Shell>
      <GlobalStyle />
      <Header>
        <TitleBar>
          <QuickAccess>
            {icons.logo}
            <QuickTools>
              <QuickButton aria-label="新建">{icons.newFile}</QuickButton>
              <QuickButton aria-label="打开">{icons.open}</QuickButton>
              <QuickButton aria-label="保存">{icons.save}</QuickButton>
              <QuickButton aria-label="另存为">{icons.saveAs}</QuickButton>
              <QuickButton aria-label="打印">{icons.print}</QuickButton>
              <QuickButton aria-label="撤销">{icons.undo}</QuickButton>
              <QuickButton aria-label="撤销列表" $narrow><Caret $light /></QuickButton>
              <QuickButton aria-label="重做">{icons.redo}</QuickButton>
              <QuickButton aria-label="重做列表" $narrow><Caret $light /></QuickButton>
            </QuickTools>
            <QuickButton aria-label="自定义" $narrow>{icons.customize}</QuickButton>
          </QuickAccess>
          <WindowTitle>
            CAXA CAD 电子图板 2020 - [C:\Users\liao_\AppData\Local\Temp\360zip$Temp\360$4\排锯.dwg]
          </WindowTitle>
        </TitleBar>
        <MenuBar>
          <MenuTab $wide>菜单</MenuTab>
          {menus.map((m) => (
            <MenuTab key={m} $active={m === menu} onClick={() => setMenu(m)}>{m}</MenuTab>
          ))}
          <FeatureSearch>
            {icons.hint}
            <input
              aria-label="功能搜索"
              placeholder="功能搜索..."
              value={query}
              onChange={(e) => setQuery(e.target.value)}
            />
          </FeatureSearch>
        </MenuBar>
      </Header>

      <Ribbon>
        <Group>
          <GroupBody $left={8} $right={6}>
            <Big icon="line" label="直线" />
            <Big icon="polyline" label="多段线" caret={false} />
            <Big icon="circle" label="圆" />
            <Big icon="arc" label="圆弧" />
            <Big icon="spline" label="曲线" />
            <Tools items={drawTools} columns="34px 26px 26px 26px" />
          </GroupBody>
          <GroupLabel>绘图</GroupLabel>
        </Group>
        <Group>
          <GroupBody $left={4} $right={3}>
            <Tools items={editTools} columns="26px 26px 26px 26px 38px" />
          </GroupBody>
          <GroupLabel>修改</GroupLabel>
        </Group>
        <Group>
          <GroupBody $left={6} $right={7}>
            <Big icon="dimension" label="尺寸" />
            <Big icon="symbol" label="符号" />
            <RowList>
              <Row icon="text" label="文字" caret />
              <Row icon="table" label="表格" />
              <Row icon="coordinate" label="坐标" caret />
            </RowList>
          </GroupBody>
          <GroupLabel>标注</GroupLabel>
        </Group>
        <Group>
          <GroupBody $left={4} $right={5}>
            <Big icon="style" label="样式管理" wide />
            <ComboStack>
              <ComboLine>
                <StackButton $split aria-label="图层工具">{icons.layerTool}<Caret /></StackButton>
                <Combo $left={4} $gap={2} $tail={3}>
                  {icons.bulb}
                  {icons.sun}
                  {icons.lock}
                  {icons.printer}
                  <Swatch $size={14} $edge="#000" />
                  <select aria-label="图层"><option>2 标注</option></select>
                  <Caret />
                </Combo>
                <StackButton aria-label="颜色">{icons.wheel}</StackButton>
                <Combo $left={7} $gap={5}>
                  <Swatch $size={13} $edge="#0b78d8" />
                  <select aria-label="当前颜色"><option>ByLayer</option></select>
                  <Caret />
                </Combo>
              </ComboLine>
              <ComboLine>
                <StackButton $split aria-label="线宽工具">{icons.weight}<Caret /></StackButton>
                <Combo $left={4} $gap={3}>
                  <LineSample $length={59} $color="#000" />
                  <select aria-label="线宽"><option>ByLayer</option></select>
                  <Caret />
                </Combo>
                <StackButton aria-label="线型工具">{icons.linetype}</StackButton>
                <Combo $left={1} $gap={4}>
                  <LineSample $length={70} $color="#ff0000" />
                  <select aria-label="线型"><option>ByLayer</option></select>
                  <Caret />
                </Combo>
              </ComboLine>
            </ComboStack>
          </GroupBody>
          <GroupLabel>特性</GroupLabel>
        </Group>
        <Group>
          <GroupBody $left={6} $right={8}>
            <Big icon="paste" label="粘贴" />
            <RowList>
              <Row icon="cut" label="剪切" />
              <Row icon="copy" label="复制" caret />
              <Row icon="match" label="特性匹配" />
            </RowList>
          </GroupBody>
          <GroupLabel>剪切板</GroupLabel>
        </Group>
      </Ribbon>

      <Main>
        <Rail>
          <RailHandle />
          <RailTab>
            {icons.library}
            <span>图库</span>
          </RailTab>
        </Rail>

        <Panel>
          <PanelTitle>
            <h2>特性</h2>
            <PanelIcon aria-label="选项">{icons.menuDown}</PanelIcon>
            <PanelIcon aria-label="固定">{icons.pin}</PanelIcon>
            <PanelIcon aria-label="关闭">{icons.close}</PanelIcon>
          </PanelTitle>
          <PanelTools>
            <FilterCombo>
              <select aria-label="对象"><option>全局信息</option></select>
              <Caret />
            </FilterCombo>
            <FilterButton aria-label="清除选择">{icons.clearFilter}</FilterButton>
            <FilterButton aria-label="快速选择">{icons.quickSelect}</FilterButton>
          </PanelTools>
          <PropertyBox>
            <PropertyScroll>
              <PropertyTable>
                <colgroup>
                  <col width="109" />
                  <col />
                </colgroup>
                <thead>
                  <tr>
                    <th scope="col">特性名</th>
                    <th scope="col">特性值</th>
                  </tr>
                </thead>
                <tbody>
                  {sections.map((s) => (
                    <React.Fragment key={s.title}>
                      <tr>
                        <SectionCell colSpan={2} $strong={s.strong}>
                          <button>{icons.fold}{s.title}</button>
                        </SectionCell>
                      </tr>
                      {s.rows.map((r) => (
                        <PropertyRow key={r.name} $tone={r.tone}>
                          <th scope="row">{r.name}</th>
                          <td><PropertyValue row={r} /></td>
                        </PropertyRow>
                      ))}
                    </React.Fragment>
                  ))}
                </tbody>
              </PropertyTable>
            </PropertyScroll>
            <PropertyHint />
          </PropertyBox>
        </Panel>

        <Splitter />

        <Workspace>
          <DocTabs>
            <DocTab><button>整体图.dwg</button></DocTab>
            <DocTab $active>
              <button>排锯.dwg</button>
              <button aria-label="关闭文件">{icons.close}</button>
            </DocTab>
          </DocTabs>
          <Canvas>
            <Drawing />
          </Canvas>
          <SheetBar>
            <SheetNav>
              {navIcons.map(([label, d]) => (
                <button key={label} aria-label={label}>
                  <svg width="8" height="7" viewBox="0 0 8 7" fill="#666" stroke="#666" strokeWidth=".8" aria-hidden="true">
                    <path d={d} />
                  </svg>
                </button>
              ))}
            </SheetNav>
            {["模型", "布局1", "布局2"].map((s) => (
              <SheetTab key={s} $active={s === sheet} onClick={() => setSheet(s)}>{s}</SheetTab>
            ))}
          </SheetBar>
        </Workspace>
      </Main>

      <CommandDock>命令行</CommandDock>
    </Shell>
  );
};

export default App;
